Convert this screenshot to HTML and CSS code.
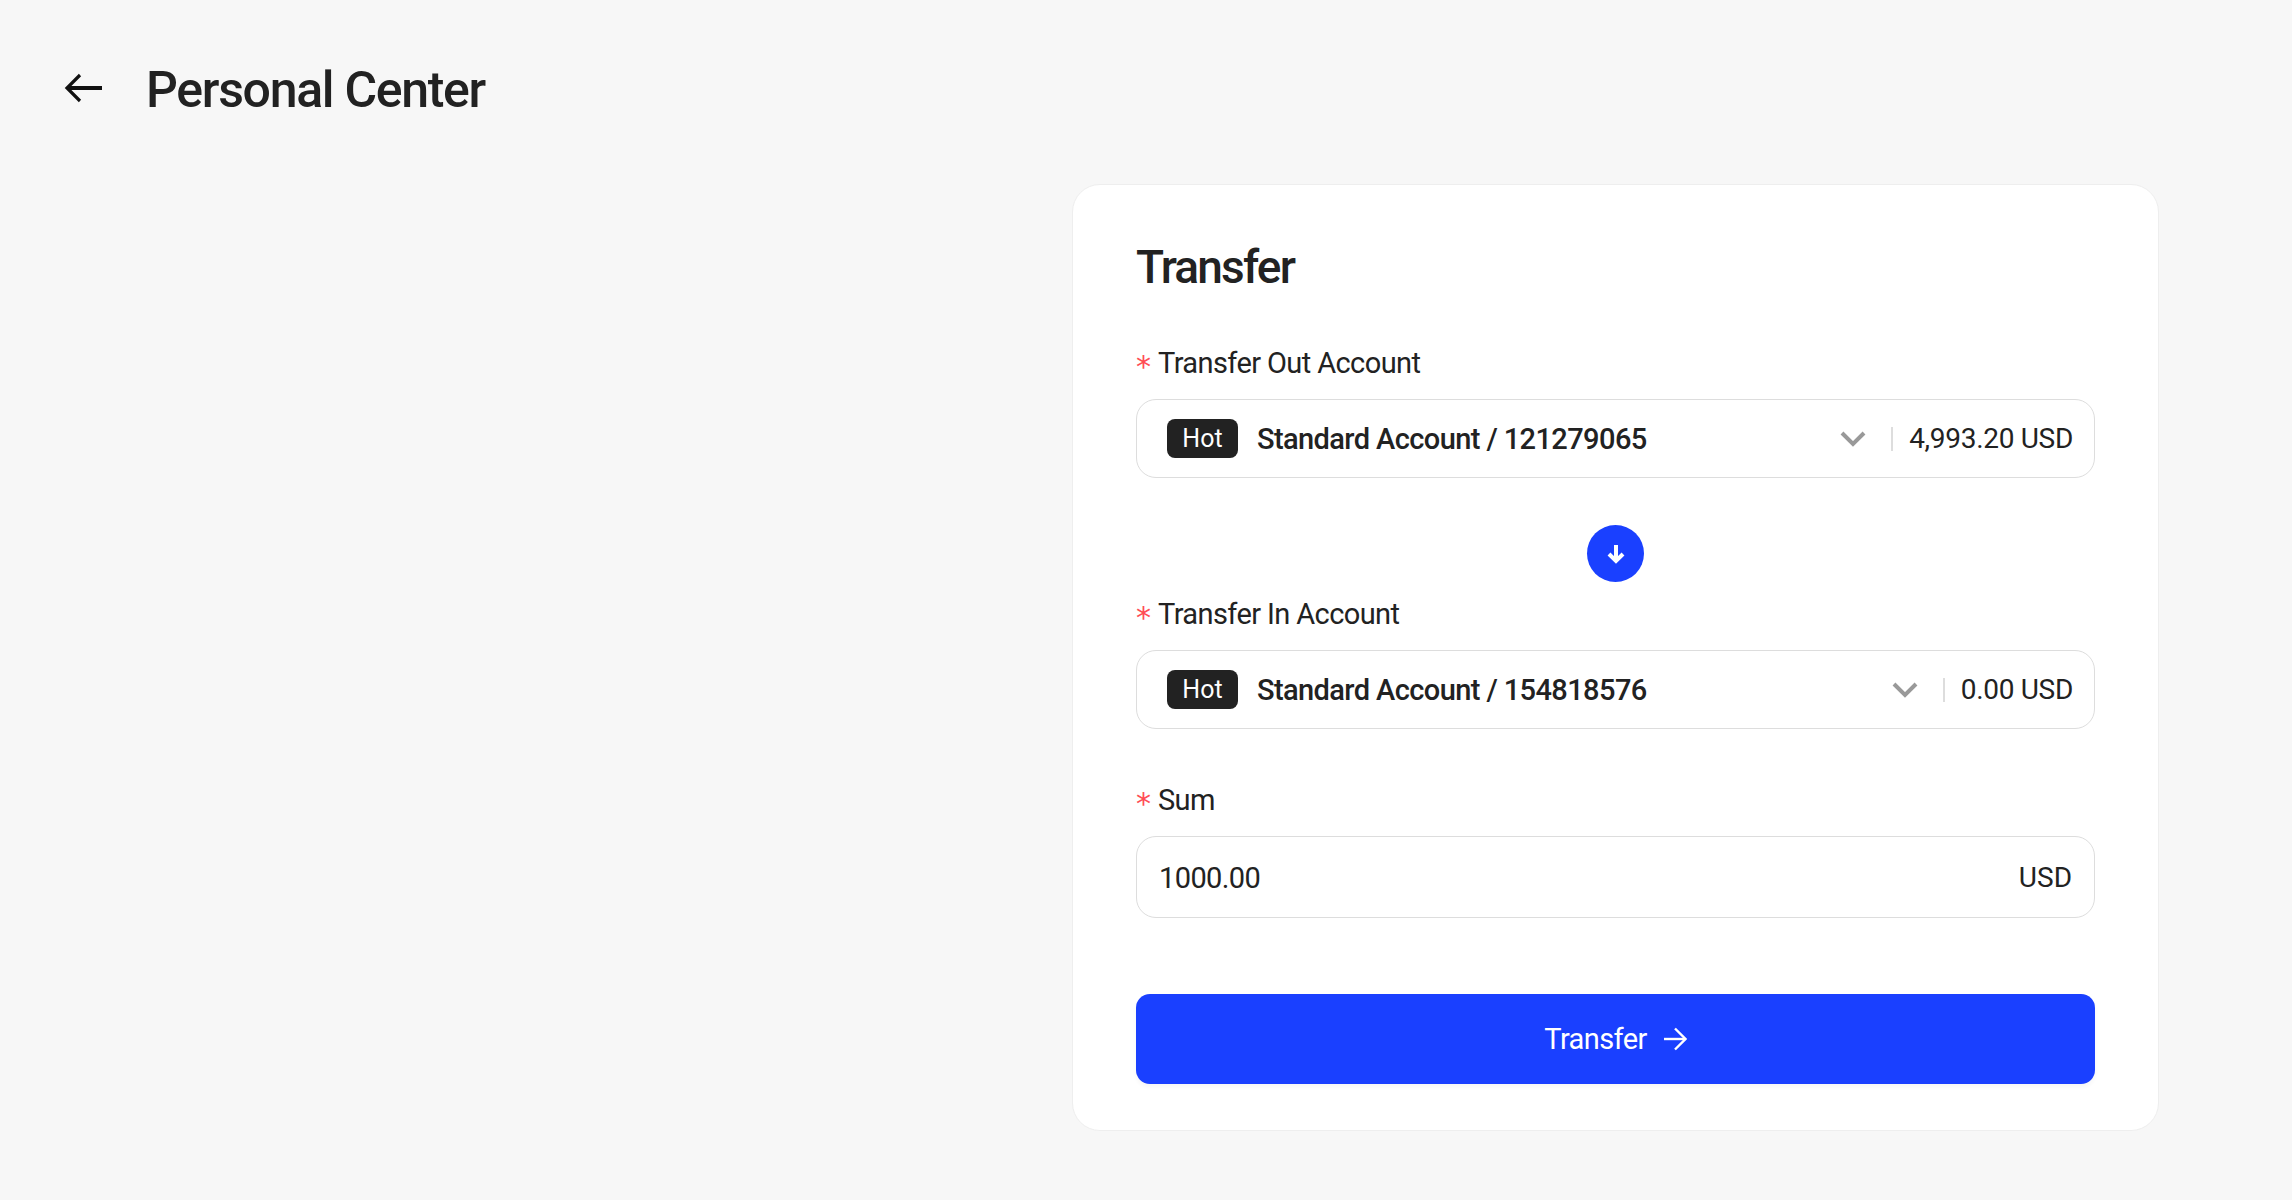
FILE: index.html
```html
<!DOCTYPE html>
<html lang="en">
  <head>
    <meta charset="UTF-8" />
    <title>Personal Center</title>
    <link rel="stylesheet" href="styles.css">
  </head>
  <body>
    <header class="topbar">
      <svg class="back" width="40" height="30" viewBox="0 0 40 30" fill="none" stroke="#111" stroke-width="3.8">
        <path d="M38 15H4" />
        <path d="M16 2L3 15l13 13" stroke-width="3.200" />
      </svg>
      <h1>Personal Center</h1>
    </header>
    <main class="page">
      <section class="card">
        <h2>Transfer</h2>
        <label class="lbl"><span class="star">*</span>Transfer Out Account</label>
        <div class="field">
          <span class="tag">Hot</span>
          <span class="acct">Standard Account / 121279065</span>
          <svg class="chev" width="26" height="16" viewBox="0 0 26 16" fill="none" stroke="#999" stroke-width="4"><path d="M2 2l11 11L24 2" /></svg>
          <span class="sep"></span>
          <span class="bal">4,993.20 USD</span>
        </div>
        <div class="swap">
          <svg width="20" height="20" viewBox="0 0 20 20" fill="none" stroke="#fff" stroke-width="4"><path d="M10 1v15" /><path d="M3 10l7 7 7-7" /></svg>
        </div>
        <label class="lbl"><span class="star">*</span>Transfer In Account</label>
        <div class="field">
          <span class="tag">Hot</span>
          <span class="acct">Standard Account / 154818576</span>
          <svg class="chev" width="26" height="16" viewBox="0 0 26 16" fill="none" stroke="#999" stroke-width="4"><path d="M2 2l11 11L24 2" /></svg>
          <span class="sep"></span>
          <span class="bal">0.00 USD</span>
        </div>
        <label class="lbl lbl-sum"><span class="star">*</span>Sum</label>
        <div class="field field-sum">
          <span class="amount">1000.00</span>
          <span class="unit">USD</span>
        </div>
        <button class="submit" type="button">
          Transfer
          <svg width="24" height="24" viewBox="0 0 24 24" fill="none" stroke="#fff" stroke-width="2.400"><path d="M1 12h21" /><path d="M12 1.500L22.500 12 12 22.500" /></svg>
        </button>
      </section>
    </main>
  </body>
</html>
```

FILE: styles.css
```css
* {
  box-sizing: border-box;
}

body {
  margin: 0;
  background-color: #f7f7f7;
  color: #222;
  font-family: Roboto, "Noto Sans", sans-serif;
}

.topbar {
  display: flex;
  align-items: center;
  gap: 42px;
  padding: 60px 0 0 64px;
  height: 116px;
}

.back {
  flex: none;
}

h1 {
  margin: 4px 0 0;
  font-size: 50px;
  line-height: 56px;
  font-weight: 500;
  letter-spacing: -1.3px;
}

.page {
  display: flex;
  justify-content: flex-end;
  padding: 68px 133px 0 0;
}

.card {
  width: 1087px;
  padding: 58px 63px 46px;
  background-color: #fff;
  border: 1px solid #eee;
  border-radius: 28px;
}

h2 {
  margin: 0 0 54px;
  font-size: 46px;
  line-height: 48px;
  font-weight: 500;
  letter-spacing: -1.8px;
}

.lbl {
  display: block;
  height: 36px;
  margin-bottom: 18px;
  font-size: 29px;
  line-height: 36px;
  letter-spacing: -0.6px;
}

.star {
  display: inline-block;
  width: 22px;
  color: #ff4d55;
  font-family: "DejaVu Sans", sans-serif;
  font-size: 30px;
  line-height: 0;
  vertical-align: -4px;
}

.lbl-sum {
  margin-top: 53px;
}

.field {
  display: flex;
  align-items: center;
  height: 79px;
  padding: 0 21px 0 30px;
  border: 1px solid #ddd;
  border-radius: 20px;
}

.tag {
  width: 71px;
  height: 39px;
  margin-right: 19px;
  border-radius: 8px;
  background-color: #222;
  color: #fff;
  font-size: 25px;
  line-height: 39px;
  text-align: center;
}

.acct {
  flex: 1;
  font-size: 29px;
  font-weight: 500;
  letter-spacing: -0.6px;
}

.sep {
  width: 2px;
  height: 24px;
  margin: 0 16px 0 25px;
  background-color: #ddd;
}

.bal {
  font-size: 28px;
  letter-spacing: -0.3px;
}

.swap {
  display: flex;
  align-items: center;
  justify-content: center;
  width: 57px;
  height: 57px;
  margin: 47px auto 14px;
  border-radius: 50%;
  background-color: #1a40ff;
}

.field-sum {
  height: 82px;
  justify-content: space-between;
  padding: 0 22px;
}

.amount {
  margin-top: 2px;
  font-size: 29px;
  letter-spacing: -0.6px;
}

.unit {
  font-size: 28px;
}

.submit {
  display: flex;
  align-items: center;
  justify-content: center;
  gap: 16px;
  width: 100%;
  height: 90px;
  margin-top: 76px;
  border: none;
  border-radius: 14px;
  background-color: #1a40ff;
  box-shadow: 0 3px 4px rgba(0, 0, 0, 0.04);
  color: #fff;
  font-family: inherit;
  font-size: 29px;
  letter-spacing: -0.6px;
}
```
